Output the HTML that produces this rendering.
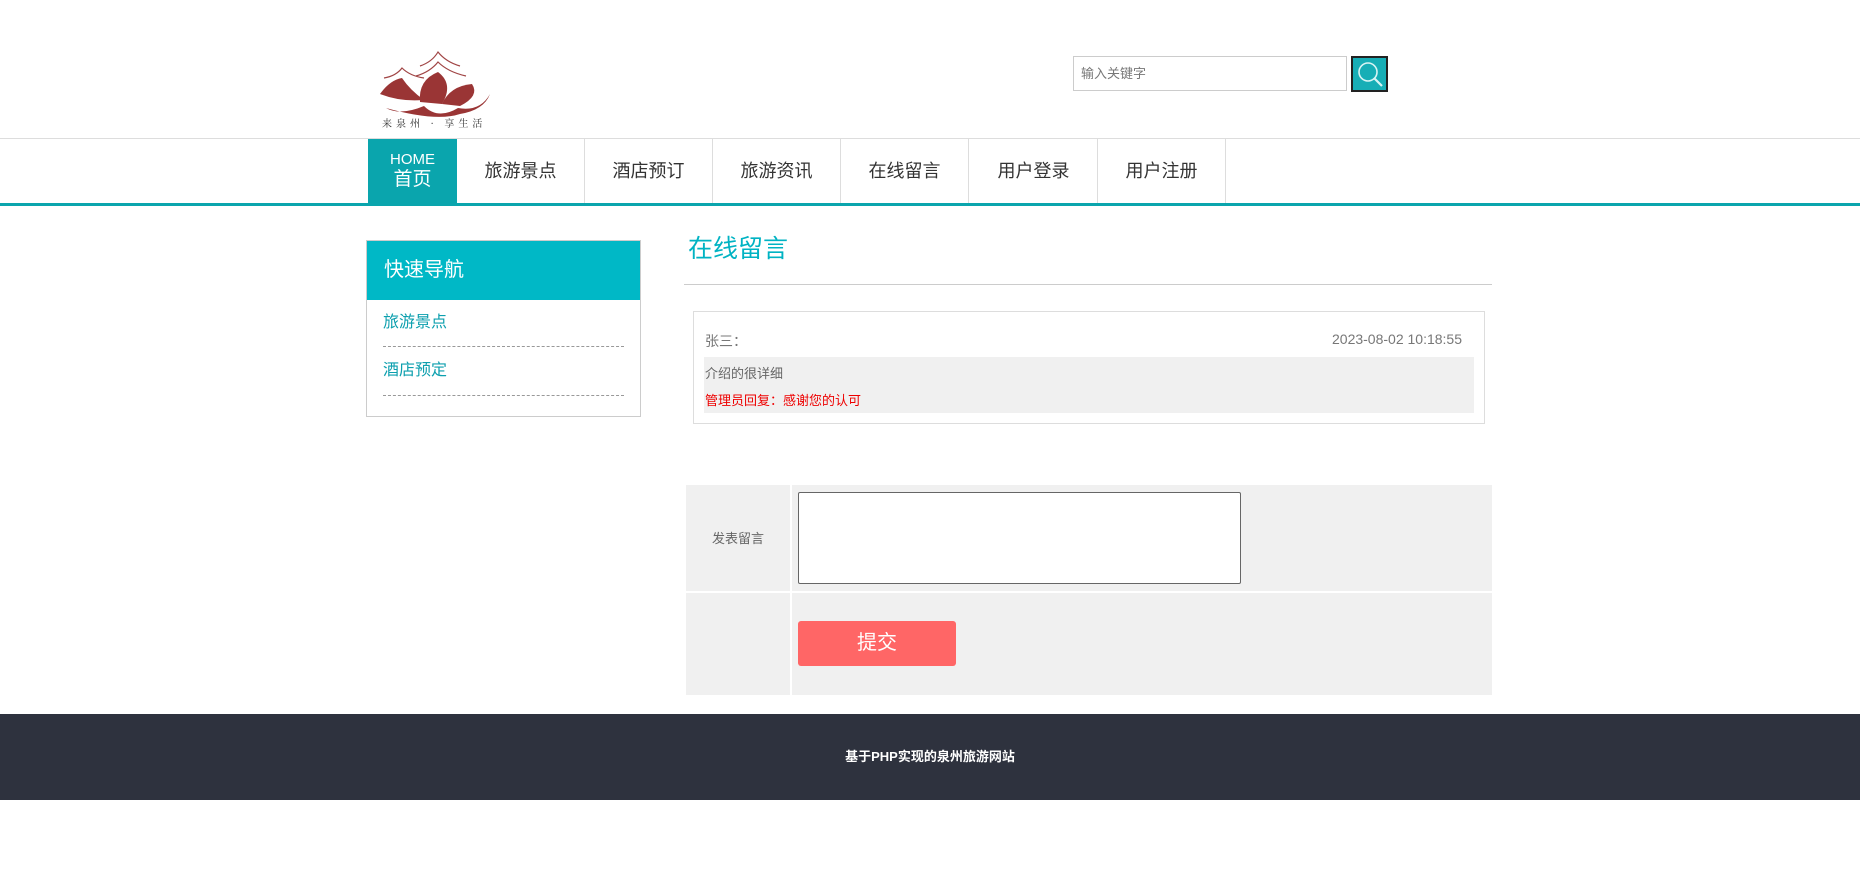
<!DOCTYPE html>
<html><head><meta charset="utf-8"><style>
*{margin:0;padding:0;box-sizing:border-box}
body{width:1860px;height:889px;background:#fff;font-family:"Liberation Sans","Noto Sans CJK SC",sans-serif;position:relative;overflow:hidden}
.a{position:absolute}
.nav{position:absolute;top:138px;left:0;width:1860px;height:64px;border-top:1px solid #ddd;border-bottom:3px solid #0aa5ad;box-sizing:content-box}
.ni{position:absolute;top:0;height:64px;width:128px;border-right:1px solid #ddd;text-align:center;line-height:64px;font-size:18px;color:#333}
</style></head><body>
<svg class="a" style="left:380px;top:50px" width="124" height="82" viewBox="0 0 124 82">
<path d="M40 16 Q52 12 58 2 Q66 12 80 16" stroke="#a04444" fill="none" stroke-width="1.2"/>
<path d="M36 26 Q50 22 58 12 Q68 22 86 26" stroke="#a04444" fill="none" stroke-width="1.2"/>
<path d="M4 28 Q16 26 22 18 Q30 26 44 28" stroke="#a04444" fill="none" stroke-width="1.2"/>
<path d="M0 44 Q10 30 22 28 Q30 40 44 50 Q20 52 0 44Z" fill="#9a3535"/>
<path d="M40 52 Q38 30 58 22 Q74 34 62 54Z" fill="#9a3535"/>
<path d="M62 54 Q70 36 92 34 Q100 46 80 56Z" fill="#9a3535"/>
<path d="M6 58 Q20 66 44 56 Q58 70 78 58 Q100 62 110 44 Q104 60 80 64 Q56 72 6 58Z" fill="#9a3535"/>
<text x="2" y="77" font-size="10" fill="#333" font-family="Noto Serif CJK SC,serif" letter-spacing="4">来泉州 · 享生活</text>
</svg>
<div class="a" style="left:1073px;top:56px;width:274px;height:35px;border:1px solid #ccc;font-size:13px;color:#777;line-height:33px;padding-left:7px">输入关键字</div>
<div class="a" style="left:1351px;top:56px;width:37px;height:36px;background:#17aeb6;border:2px solid #222">
<svg width="33" height="32"><circle cx="15" cy="14" r="9" stroke="#d8f4f4" stroke-width="1.6" fill="none"/><line x1="21.5" y1="20.5" x2="29" y2="28" stroke="#d8f4f4" stroke-width="2.2"/></svg></div>
<div class="nav">
<div class="ni" style="left:368px;width:89px;background:#0aa5ad;color:#fff;border:none;line-height:20px;padding-top:11px"><div style="font-size:15px">HOME</div><div style="font-size:19px">首页</div></div>
<div class="ni" style="left:457px">旅游景点</div>
<div class="ni" style="left:585px">酒店预订</div>
<div class="ni" style="left:713px">旅游资讯</div>
<div class="ni" style="left:841px">在线留言</div>
<div class="ni" style="left:970px">用户登录</div>
<div class="ni" style="left:1098px">用户注册</div>
</div>
<div class="a" style="left:366px;top:240px;width:275px;height:177px;border:1px solid #ccc">
<div style="height:59px;background:#00b8c6;color:#fff;font-size:20px;line-height:59px;padding-left:17px">快速导航</div>
<div style="margin:0 16px;border-bottom:1px dashed #999;height:47px;line-height:46px;color:#0c9fae;font-size:16px">旅游景点</div>
<div style="margin:0 16px;border-bottom:1px dashed #999;height:49px;line-height:48px;color:#0c9fae;font-size:16px">酒店预定</div>
</div>
<div class="a" style="left:688px;top:229px;font-size:25px;color:#00b3c3">在线留言</div>
<div class="a" style="left:684px;top:284px;width:808px;height:1px;background:#ccc"></div>
<div class="a" style="left:693px;top:311px;width:792px;height:113px;border:1px solid #ddd">
<div class="a" style="left:11px;top:19px;font-size:14px;color:#777">张三：</div>
<div class="a" style="right:22px;top:19px;font-size:14px;color:#777">2023-08-02 10:18:55</div>
<div class="a" style="left:10px;top:45px;width:770px;height:56px;background:#f0f0f0">
<div class="a" style="left:1px;top:6px;font-size:13px;color:#666">介绍的很详细</div>
<div class="a" style="left:1px;top:33px;font-size:13px;color:#e00">管理员回复：感谢您的认可</div>
</div></div>
<div class="a" style="left:686px;top:485px;width:806px;height:210px;background:#f0f0f0">
<div class="a" style="left:104px;top:0;width:2px;height:210px;background:#fff"></div>
<div class="a" style="left:0;top:106px;width:806px;height:2px;background:#fff"></div>
<div class="a" style="left:0;top:43px;width:104px;text-align:center;font-size:13px;color:#666">发表留言</div>
<div class="a" style="left:112px;top:7px;width:443px;height:92px;background:#fff;border:1px solid #666;border-radius:2px"></div>
<div class="a" style="left:112px;top:136px;width:158px;height:45px;background:#ff6666;border-radius:3px;color:#fff;font-size:20px;text-align:center;line-height:45px">提交</div>
</div>
<div class="a" style="left:0;top:714px;width:1860px;height:86px;background:#2e323e;color:#fff;font-size:13px;font-weight:bold;text-align:center;line-height:86px">基于PHP实现的泉州旅游网站</div>
</body></html>
